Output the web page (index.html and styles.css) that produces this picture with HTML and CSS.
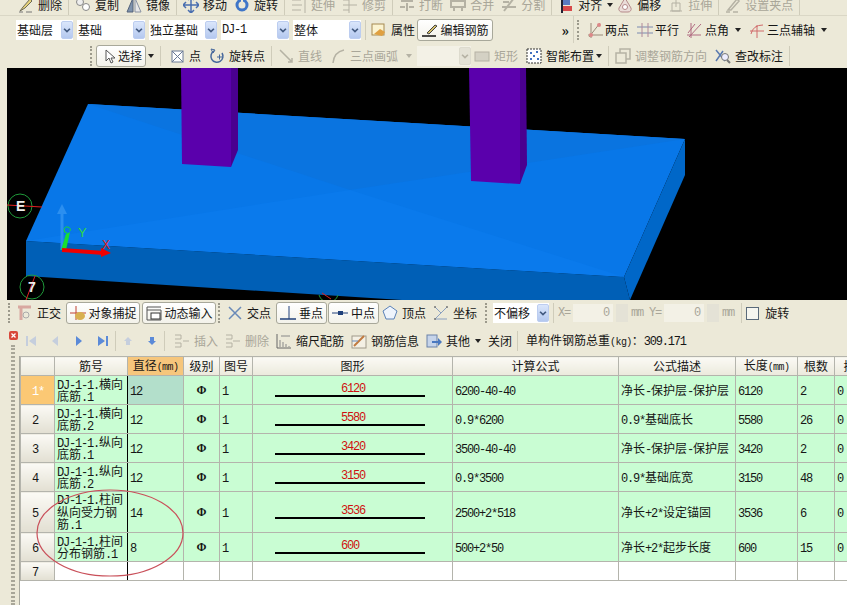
FILE: index.html
```html
<!DOCTYPE html>
<html lang="zh-CN">
<head>
  <meta charset="UTF-8" />
  <title>钢筋编辑</title>
  <link rel="stylesheet" href="styles.css">
</head>
<body>
  <!-- top toolbars -->
  <div class="tb top">
    <span class="it"><svg class="ic" viewBox="0 0 16 16"><path d="M2 14l3-4 7-8 2 2-7 7z" fill="#e6d27a" stroke="#6d6a58"/><path d="M1 15h4M8 15h6" stroke="#777"/></svg>删除</span>
    <i class="sep"></i>
    <span class="it"><svg class="ic" viewBox="0 0 16 16"><circle cx="5" cy="5" r="3.5" fill="#eee" stroke="#888"/><circle cx="11" cy="10" r="3.5" fill="#fff" stroke="#888"/></svg>复制</span>
    <span class="it"><svg class="ic" viewBox="0 0 16 16"><path d="M7 1v14H1z" fill="#7f93ad" stroke="#55637a"/><path d="M9 1v14h6z" fill="#e8e8e8" stroke="#8a93a3"/></svg>镜像</span>
    <i class="sep"></i>
    <span class="it"><svg class="ic" viewBox="0 0 16 16"><path d="M8 0v16M0 8h16M5 3l3-3 3 3M5 13l3 3 3-3M3 5L0 8l3 3M13 5l3 3-3 3" fill="none" stroke="#4a6fb0" stroke-width="1.5"/></svg>移动</span>
    <span class="it"><svg class="ic" viewBox="0 0 16 16"><circle cx="8" cy="8" r="5" fill="none" stroke="#3f76c8" stroke-width="3"/><path d="M8 0v6" stroke="#ece9d8" stroke-width="2"/></svg>旋转</span>
    <i class="sep"></i>
    <span class="it off"><svg class="ic" viewBox="0 0 16 16"><path d="M1 3h9M1 8h10M1 13h9M14 0v16" fill="none" stroke="#b5b2a4"/></svg>延伸</span>
    <span class="it off"><svg class="ic" viewBox="0 0 16 16"><path d="M1 3h6M1 8h14M1 13h6M7 0v16" fill="none" stroke="#b5b2a4"/></svg>修剪</span>
    <i class="sep"></i>
    <span class="it off"><svg class="ic" viewBox="0 0 16 16"><path d="M2 4h12M1 10h5M10 10h5M8 6v8" fill="none" stroke="#b5b2a4" stroke-width="2"/></svg>打断</span>
    <span class="it off"><svg class="ic" viewBox="0 0 16 16"><path d="M1 4h14v6H1zM4 10v4M12 10v4" fill="none" stroke="#b5b2a4" stroke-width="2"/></svg>合并</span>
    <span class="it off"><svg class="ic" viewBox="0 0 16 16"><path d="M1 10h14M3 14l10-13M2 5h6" fill="none" stroke="#b5b2a4" stroke-width="2"/></svg>分割</span>
    <i class="sep"></i>
    <span class="it"><svg class="ic" viewBox="0 0 16 16"><path d="M4 0v16" stroke="#223" stroke-width="2"/><rect x="5" y="3" width="7" height="5" fill="#5a7ac0"/><rect x="5" y="9" width="9" height="5" fill="#d84a4a"/></svg>对齐</span>
    <i class="caret"></i>
    <span class="it"><svg class="ic" viewBox="0 0 16 16"><path d="M8 1l6 10a3 3 0 0 1-3 4H5a3 3 0 0 1-3-4z" fill="#eadcd8" stroke="#b58a8a"/><circle cx="8" cy="10" r="2.5" fill="#fff" stroke="#b58a8a"/></svg>偏移</span>
    <span class="it off"><svg class="ic" viewBox="0 0 16 16"><path d="M4 14V6h8v8zM8 1v9M2 14h12" fill="none" stroke="#b5b2a4"/></svg>拉伸</span>
    <i class="sep"></i>
    <span class="it off"><svg class="ic" viewBox="0 0 16 16"><path d="M3 13L12 2l2 2-8 9zM1 15h4M8 15h5" fill="none" stroke="#b5b2a4" stroke-width="1.5"/></svg>设置夹点</span>
    <i class="sep"></i>
  </div>

  <div class="row2">
    <div class="tb bar-l">
      <div class="sels">
        <div class="sel w1"><span>基础层</span><b class="arr"><svg viewBox="0 0 12 16"><path d="M2.5 6.5L6 10l3.5-3.5" fill="none" stroke="#42597f" stroke-width="2"/></svg></b></div>
        <div class="sel"><span>基础</span><b class="arr"><svg viewBox="0 0 12 16"><path d="M2.5 6.5L6 10l3.5-3.5" fill="none" stroke="#42597f" stroke-width="2"/></svg></b></div>
        <div class="sel"><span>独立基础</span><b class="arr"><svg viewBox="0 0 12 16"><path d="M2.5 6.5L6 10l3.5-3.5" fill="none" stroke="#42597f" stroke-width="2"/></svg></b></div>
        <div class="sel"><span class="l">DJ-1</span><b class="arr"><svg viewBox="0 0 12 16"><path d="M2.5 6.5L6 10l3.5-3.5" fill="none" stroke="#42597f" stroke-width="2"/></svg></b></div>
        <div class="sel"><span>整体</span><b class="arr"><svg viewBox="0 0 12 16"><path d="M2.5 6.5L6 10l3.5-3.5" fill="none" stroke="#42597f" stroke-width="2"/></svg></b></div>
      </div>
      <i class="sep"></i>
      <span class="it"><svg class="ic" viewBox="0 0 16 16"><rect x="1" y="2" width="12" height="11" fill="#fbf3d0" stroke="#a58a50"/><path d="M3 12l6-5 5 3-3 4z" fill="#e0a040"/></svg>属性</span>
      <span class="btn edit"><svg class="ic" viewBox="0 0 16 16"><path d="M5 11l8-8 2 1-8 8z" fill="#d8c26a" stroke="#444"/><path d="M0 14h14" stroke="#111" stroke-width="1.5"/></svg>编辑钢筋</span>
      <span class="more">»</span>
    </div>
    <div class="tb bar-r">
      <i class="grip"></i>
      <span class="it"><svg class="ic" viewBox="0 0 16 16"><path d="M1 13h15M4 1v15M13 1L2 15" fill="none" stroke="#9a8a78"/><circle cx="4" cy="13" r="2" fill="#d88"/><circle cx="12" cy="3" r="2" fill="#d88"/></svg>两点</span>
      <span class="it"><svg class="ic" viewBox="0 0 16 16"><path d="M0 5h16M0 11h16" stroke="#7a8ab0"/><path d="M5 1v14M11 1v14" stroke="#b08a9a"/></svg>平行</span>
      <span class="it"><svg class="ic" viewBox="0 0 16 16"><path d="M0 13h14M4 1v15M14 2L2 15M8 2L1 11" fill="none" stroke="#b06a80"/></svg>点角</span>
      <i class="caret"></i>
      <span class="it"><svg class="ic" viewBox="0 0 16 16"><path d="M1 9h14M8 3v13" stroke="#d06a6a"/><path d="M2 12Q4 3 14 3" fill="none" stroke="#d06a6a"/></svg>三点辅轴</span>
      <i class="caret"></i>
    </div>
  </div>

  <div class="tb row3">
    <i class="grip"></i>
    <span class="btn pick"><svg class="ic" viewBox="0 0 16 16"><path d="M4 2v11l3-3 2 5 2-1-2-4h4z" fill="#fff" stroke="#555"/></svg>选择</span>
    <i class="caret"></i>
    <i class="sep"></i>
    <span class="it dot"><svg class="ic" viewBox="0 0 16 16"><rect x="2" y="3" width="11" height="11" fill="#fff" stroke="#6a7a96"/><path d="M2 3l11 11M13 3L2 14" stroke="#6a7a96"/></svg>点</span>
    <span class="it"><svg class="ic" viewBox="0 0 16 16"><path d="M5 3a6 6 0 1 0 8 2" fill="none" stroke="#46689c" stroke-width="1.5"/><path d="M2 1l4 1-2 3zM8 9h5M10.5 6.5v5" fill="none" stroke="#46689c"/></svg>旋转点</span>
    <i class="sep"></i>
    <span class="it off"><svg class="ic" viewBox="0 0 16 16"><path d="M2 2l12 12M10 14h4v-4" fill="none" stroke="#b5b2a4" stroke-width="1.5"/></svg>直线</span>
    <span class="it off"><svg class="ic" viewBox="0 0 16 16"><path d="M3 15Q4 4 14 2" fill="none" stroke="#b5b2a4" stroke-width="1.5"/></svg>三点画弧</span>
    <i class="caret off"></i>
    <div class="sel dis"><span></span><b class="arr"><svg viewBox="0 0 12 16"><path d="M2.5 6.5L6 10l3.5-3.5" fill="none" stroke="#b5b2a4" stroke-width="2"/></svg></b></div>
    <span class="it off rect"><svg class="ic" viewBox="0 0 16 16"><rect x="1" y="4" width="14" height="9" fill="#d4d1c4" stroke="#b5b2a4"/></svg>矩形</span>
    <span class="it"><svg class="ic" viewBox="0 0 16 16"><rect x="1" y="1" width="14" height="14" fill="#fff" stroke="#333" stroke-dasharray="2 1"/><path d="M4 5h2M10 4h2M7 8h2M4 11h2M11 11h2" stroke="#3f6fc0" stroke-width="2"/></svg>智能布置</span>
    <i class="caret"></i>
    <i class="sep"></i>
    <span class="it off"><svg class="ic" viewBox="0 0 16 16"><path d="M1 5h10v10H1zM5 5V1h10v10h-4" fill="none" stroke="#b5b2a4" stroke-width="1.5"/></svg>调整钢筋方向</span>
    <span class="it"><svg class="ic" viewBox="0 0 16 16"><path d="M1 2l9 11M1 13L8 3" stroke="#5a7ab0" stroke-width="1.5"/><circle cx="10" cy="9" r="3.5" fill="#eef" stroke="#777"/><path d="M12 12l3 3" stroke="#777" stroke-width="2"/></svg>查改标注</span>
    <i class="sep"></i>
  </div>

  <!-- 3d view -->
  <div class="view">
    <svg viewBox="7 68 840 232" width="840" height="232">
      <polygon points="88,104 685,139 624,277 26,241" fill="#0877e8"/>
      <polygon points="88,104 685,139 350,190" fill="#0a74e0"/>
      <polygon points="26,241 350,190 624,277" fill="#0a7aec"/>
      <polygon points="26,241 624,277 630,300 402,300 26,276" fill="#005fb6"/>
      <polygon points="685,139 685,175 630,300 624,277" fill="#0067c8"/>
      <polygon points="181,68 231,68 231,167 182,164" fill="#5a00ac"/>
      <polygon points="231,68 238,68 238,150 231,167" fill="#4a0090"/>
      <polygon points="469,68 520,68 520,184 471,181" fill="#5a00ac"/>
      <polygon points="520,68 526,68 527,165 520,184" fill="#4a0090"/>
      <g fill="none" stroke="#1f9a3a">
        <circle cx="20" cy="206" r="12"/>
        <circle cx="32" cy="287" r="12"/>
        <path d="M319 295a10 10 0 0 0 19 0"/>
      </g>
      <path d="M7 205l35 2M35 276L26 300M322 293l9 6" stroke="#e02020"/>
      <text class="mark" x="16" y="211">E</text>
      <text class="mark" x="28" y="292">7</text>
      <path d="M62 250V208" stroke="#2b8ff0" stroke-width="3"/>
      <polygon points="62,204 57,214 67,214" fill="#2b8ff0"/>
      <polygon points="61,250 66,250 70,232 66,234" fill="#18e030"/>
      <path d="M67 233a3 3 0 1 1 3 -2" fill="none" stroke="#18e030"/>
      <path d="M62 250l42 3" stroke="#f00000" stroke-width="4"/>
      <polygon points="101,248 111,253 101,257" fill="#f00000"/>
      <text class="ax-y" x="78" y="237">Y</text>
      <text class="ax-x" x="102" y="249">X</text>
    </svg>
  </div>

  <div class="tb snap">
    <i class="grip"></i>
    <span class="it off"><svg class="ic" viewBox="0 0 16 16"><path d="M1 2h13M4 2v13" stroke="#d8a8a0" stroke-width="3"/><circle cx="9" cy="10" r="3" fill="none" stroke="#aaa"/></svg><em>正交</em></span>
    <div class="btns">
      <span class="btn"><svg class="ic" viewBox="0 0 16 16"><path d="M0 8h16M6 1v14" stroke="#c04030"/><ellipse cx="10" cy="11" rx="5" ry="4" fill="#d8b050"/></svg>对象捕捉</span>
      <span class="btn"><svg class="ic" viewBox="0 0 16 16"><path d="M1 2h14M1 5h14M1 2v13h14V5" fill="none" stroke="#555"/><rect x="5" y="8" width="9" height="6" fill="#fff" stroke="#333"/></svg>动态输入</span>
    </div>
    <i class="grip"></i>
    <span class="it"><svg class="ic" viewBox="0 0 16 16"><path d="M2 2l12 12M14 2L2 14" stroke="#6a8ab8" stroke-width="1.5"/></svg>交点</span>
    <div class="btns tight">
      <span class="btn"><svg class="ic" viewBox="0 0 16 16"><path d="M0 14h16" stroke="#20407a" stroke-width="1.5"/><path d="M9 1v13" stroke="#20407a"/></svg>垂点</span>
      <span class="btn"><svg class="ic" viewBox="0 0 16 16"><path d="M0 8h16" stroke="#20407a"/><rect x="6" y="6" width="5" height="4" fill="#20407a"/></svg>中点</span>
    </div>
    <span class="it"><svg class="ic" viewBox="0 0 16 16"><path d="M8 1l7 5-3 8H4L1 6z" fill="#eef4fc" stroke="#5a82b8"/></svg>顶点</span>
    <span class="it"><svg class="ic" viewBox="0 0 16 16"><path d="M2 14L14 2M2 2l6 6M2 14h12" stroke="#8aa0c0"/><circle cx="2" cy="2" r="1" fill="#777"/><circle cx="14" cy="2" r="1" fill="#777"/><circle cx="2" cy="14" r="1" fill="#777"/></svg>坐标</span>
    <i class="grip far"></i>
    <div class="sel w2"><span>不偏移</span><b class="arr"><svg viewBox="0 0 12 16"><path d="M2.5 6.5L6 10l3.5-3.5" fill="none" stroke="#42597f" stroke-width="2"/></svg></b></div>
    <i class="sep"></i>
    <div class="coord">
      <span class="l">X=</span><span class="num l">0</span><b class="spin"></b><span class="l mm">mm</span>
      <span class="l">Y=</span><span class="num l">0</span><b class="spin"></b><span class="l mm">mm</span>
    </div>
    <i class="sep"></i>
    <i class="chk"></i>
    <span class="rot">旋转</span>
  </div>

  <!-- rebar table panel -->
  <div class="panel">
    <div class="side">
      <svg class="close" viewBox="0 0 9 9"><rect width="9" height="9" rx="2" fill="#d8483a"/><path d="M2.5 2.5l4 4M6.5 2.5l-4 4" stroke="#fff" stroke-width="1.3"/></svg>
      <i class="vgrip"></i>
    </div>
    <div class="main">
      <div class="tb ptool">
        <div class="nav">
          <svg class="nv" viewBox="0 0 12 14"><path d="M1 2h2v10H1zM11 2v10L4 7z" fill="#c5cedd"/></svg>
          <svg class="nv" viewBox="0 0 12 14"><path d="M9 2v10L3 7z" fill="#c5cedd"/></svg>
          <svg class="nv" viewBox="0 0 12 14"><path d="M3 2v10l6-5z" fill="#5b8ad8"/></svg>
          <svg class="nv" viewBox="0 0 12 14"><path d="M1 2v10l7-5zM9 2h2v10H9z" fill="#5b8ad8"/></svg>
          <i class="sep"></i>
          <svg class="nv" viewBox="0 0 12 14"><path d="M6 3l4 4H8v4H4V7H2z" fill="#c5cedd"/></svg>
          <svg class="nv" viewBox="0 0 12 14"><path d="M6 11L2 7h2V3h4v4h2z" fill="#5b8ad8"/></svg>
          <i class="sep"></i>
        </div>
        <span class="it off"><svg class="ic" viewBox="0 0 16 16"><path d="M1 2h6M7 2v4H1M1 10h6v4H1M9 8h6" fill="none" stroke="#b5b2a4"/></svg>插入</span>
        <span class="it off"><svg class="ic" viewBox="0 0 16 16"><path d="M1 2h6v4H1M1 10h6v4H1M8 8h7" fill="none" stroke="#b5b2a4"/></svg>删除</span>
        <span class="it"><svg class="ic" viewBox="0 0 16 16"><path d="M1 1v14h14" fill="none" stroke="#666"/><path d="M4 14V7M7 14V9M10 14v-3M13 14v-1M5 3h9" stroke="#888"/></svg>缩尺配筋</span>
        <span class="it"><svg class="ic" viewBox="0 0 16 16"><rect x="1" y="3" width="14" height="12" fill="#f4f0e4" stroke="#a09a8a"/><path d="M3 13L13 3" stroke="#c07a40" stroke-width="2"/><path d="M1 8h6" stroke="#6a8ab8"/></svg>钢筋信息</span>
        <span class="it"><svg class="ic" viewBox="0 0 16 16"><rect x="1" y="2" width="10" height="12" fill="#c6d4ea" stroke="#6a82a8"/><path d="M6 8h6V5l4 4-4 4v-3H6z" fill="#4a78c0"/></svg>其他</span>
        <i class="caret"></i>
        <span class="txt">关闭</span>
        <i class="sep"></i>
        <span class="txt total">单构件钢筋总重<span class="sm">(kg)</span>：<span class="l">309.171</span></span>
      </div>
      <div class="grid-wrap">
        <table class="grid">
          <colgroup>
            <col class="c0"><col class="c1"><col class="c2"><col class="c3"><col class="c4"><col class="c5"><col class="c6"><col class="c7"><col class="c8"><col class="c9"><col class="c10">
          </colgroup>
          <thead>
            <tr><th></th><th>筋号</th><th class="hot">直径<span class="sm">(mm)</span></th><th>级别</th><th>图号</th><th>图形</th><th>计算公式</th><th>公式描述</th><th>长度<span class="sm">(mm)</span></th><th>根数</th><th>搭</th></tr>
          </thead>
          <tbody>
            <tr class="r">
              <td class="idx cur"><span class="l">1*</span></td><td class="no"><span class="l">DJ-1-1.</span>横向<br>底筋<span class="l">.1</span></td><td class="sel-cell"><span class="l">12</span></td><td class="lv">Φ</td><td><span class="l">1</span></td>
              <td><div class="shape"><span class="l">6120</span></div></td><td><span class="l">6200-40-40</span></td><td>净长<span class="l">-</span>保护层<span class="l">-</span>保护层</td><td><span class="l">6120</span></td><td><span class="l">2</span></td><td><span class="l">0</span></td>
            </tr>
            <tr class="r">
              <td class="idx"><span class="l">2</span></td><td class="no"><span class="l">DJ-1-1.</span>横向<br>底筋<span class="l">.2</span></td><td><span class="l">12</span></td><td class="lv">Φ</td><td><span class="l">1</span></td>
              <td><div class="shape"><span class="l">5580</span></div></td><td><span class="l">0.9*6200</span></td><td><span class="l">0.9*</span>基础底长</td><td><span class="l">5580</span></td><td><span class="l">26</span></td><td><span class="l">0</span></td>
            </tr>
            <tr class="r">
              <td class="idx"><span class="l">3</span></td><td class="no"><span class="l">DJ-1-1.</span>纵向<br>底筋<span class="l">.1</span></td><td><span class="l">12</span></td><td class="lv">Φ</td><td><span class="l">1</span></td>
              <td><div class="shape"><span class="l">3420</span></div></td><td><span class="l">3500-40-40</span></td><td>净长<span class="l">-</span>保护层<span class="l">-</span>保护层</td><td><span class="l">3420</span></td><td><span class="l">2</span></td><td><span class="l">0</span></td>
            </tr>
            <tr class="r">
              <td class="idx"><span class="l">4</span></td><td class="no"><span class="l">DJ-1-1.</span>纵向<br>底筋<span class="l">.2</span></td><td><span class="l">12</span></td><td class="lv">Φ</td><td><span class="l">1</span></td>
              <td><div class="shape"><span class="l">3150</span></div></td><td><span class="l">0.9*3500</span></td><td><span class="l">0.9*</span>基础底宽</td><td><span class="l">3150</span></td><td><span class="l">48</span></td><td><span class="l">0</span></td>
            </tr>
            <tr class="r tall">
              <td class="idx"><span class="l">5</span></td><td class="no"><span class="l">DJ-1-1.</span>柱间<br>纵向受力钢<br>筋<span class="l">.1</span></td><td><span class="l">14</span></td><td class="lv">Φ</td><td><span class="l">1</span></td>
              <td><div class="shape"><span class="l">3536</span></div></td><td><span class="l">2500+2*518</span></td><td>净长<span class="l">+2*</span>设定锚固</td><td><span class="l">3536</span></td><td><span class="l">6</span></td><td><span class="l">0</span></td>
            </tr>
            <tr class="r">
              <td class="idx"><span class="l">6</span></td><td class="no"><span class="l">DJ-1-1.</span>柱间<br>分布钢筋<span class="l">.1</span></td><td><span class="l">8</span></td><td class="lv">Φ</td><td><span class="l">1</span></td>
              <td><div class="shape"><span class="l">600</span></div></td><td><span class="l">500+2*50</span></td><td>净长<span class="l">+2*</span>起步长度</td><td><span class="l">600</span></td><td><span class="l">15</span></td><td><span class="l">0</span></td>
            </tr>
            <tr class="blank">
              <td class="idx"><span class="l">7</span></td><td class="no"></td><td></td><td></td><td></td><td></td><td></td><td></td><td></td><td></td><td></td>
            </tr>
          </tbody>
        </table>
        <svg class="ring" viewBox="0 0 150 90"><ellipse cx="75" cy="45" rx="73" ry="43" fill="none" stroke="#c9505a" stroke-width="1.2"/></svg>
      </div>
    </div>
  </div>
</body>
</html>
```

FILE: styles.css
```css
html, body { margin: 0; height: 605px; overflow: hidden; }
body { background: #ece9d8; color: #161616; font: 12px/14px "Noto Sans CJK SC", "Liberation Sans", sans-serif; }

/* half-width latin in the old bitmap font is 6px wide */
.l { font-family: "Liberation Mono", monospace; letter-spacing: -1.2px; }
.sm { font-family: "Liberation Mono", monospace; font-size: 10px; letter-spacing: -0.6px; }

.tb { display: flex; align-items: center; gap: 8px; white-space: nowrap; }
.it { display: flex; align-items: center; gap: 4px; flex: none; }
.ic { width: 16px; height: 16px; flex: none; }
.off { color: #a9a699; }
.sep { width: 1px; height: 20px; margin: 0 -2px; background: #cfccba; flex: none; }
.grip { width: 0; height: 20px; border-left: 2px dotted #9c9a8c; flex: none; }
.caret { width: 0; height: 0; margin-left: -2px; border: 3px solid transparent; border-top: 4px solid #222; border-bottom: 0; flex: none; }
.caret.off { border-top-color: #b5b2a4; }
.btn { display: flex; align-items: center; justify-content: center; gap: 3px; height: 22px; border: 1px solid #a8a89a; border-radius: 3px; background: linear-gradient(#fff, #f3f2ea); box-sizing: border-box; flex: none; }

.top { height: 16px; padding-left: 18px; gap: 7px; align-items: flex-start; overflow: hidden; border-bottom: 1px solid #dad7c6; box-sizing: border-box; }
.top .it { margin-top: -3px; }
.top .sep { margin: 0 -1px; }
.top .caret { margin-top: 3px; margin-right: -3px; }

.row2 { display: flex; height: 27px; }
.bar-l { width: 574px; padding-left: 16px; box-sizing: border-box; border-right: 1px solid #d3d0bf; }
.bar-l .sep { margin: 0 -3px 0 -4px; }
.bar-r { flex: 1; padding-left: 3px; }
.bar-r .it { gap: 2px; }
.sels { display: flex; gap: 4px; }
.sel { display: flex; justify-content: space-between; width: 68px; height: 20px; background: #fff; line-height: 20px; flex: none; }
.sel span { padding-left: 1px; }
.sel.w1 { width: 57px; }
.sel.w2 { width: 56px; }
.sel.dis { width: 54px; margin-left: -3px; background: #f3f1e6; }
.sel.dis .arr { background: #e4e2d6; border-color: #dddbce; }
.arr { width: 12px; height: 18px; margin: 1px 0; background: linear-gradient(#dae6fb, #b4c8ef); border: 1px solid #bccdf0; box-sizing: border-box; border-radius: 2px; }
.arr svg { display: block; width: 10px; height: 16px; }
.edit { width: 76px; height: 22px; margin-left: -6px; }
.more { margin-left: auto; margin-right: 4px; font-size: 14px; font-weight: bold; }

.row3 { height: 25px; padding-left: 90px; }
.row3 .grip { margin-right: -4px; }
.pick { width: 50px; gap: 0; padding-left: 5px; justify-content: flex-start; }
.row3 .caret { margin-left: -6px; }
.row3 .caret.off { margin-left: 0; }
.dot { gap: 3px; padding-left: 3px; }
.rect { margin-left: -5px; }

.view { height: 232px; margin-left: 7px; background: #000; overflow: hidden; }
.view svg { display: block; }
.mark { fill: #eee; font: bold 14px "Liberation Sans", sans-serif; }
.ax-y { fill: #2fd84a; font: 13px "Liberation Sans", sans-serif; }
.ax-x { fill: #e02020; font: 12px "Liberation Sans", sans-serif; }

.snap { height: 26px; padding-left: 8px; gap: 5px; }
.snap .grip { margin: 0 2px 0 -3px; }
.snap .grip:first-child { margin: 0 2px 0 0; }
.snap .grip.far { margin: 0 1px 0 3px; }
.snap em { font-style: normal; color: #161616; }
.snap .btn { width: 74px; }
.snap .it + .it { margin-left: 2px; }
.btns { display: flex; gap: 2px; }
.btns.tight { gap: 1px; margin-right: -2px; }
.btns.tight .btn { width: 51px; }
.snap .sep { margin: 0 -1px; }
.coord { display: flex; align-items: center; gap: 3px; color: #a9a699; }
.num { width: 40px; height: 18px; padding-right: 4px; box-sizing: border-box; background: #f3f1e6; text-align: right; line-height: 18px; }
.spin { width: 12px; height: 18px; background: #e4e2d6; }
.mm { margin-right: 3px; }
.chk { width: 11px; height: 11px; border: 1px solid #5a6a7a; background: #f6f6f0; flex: none; }
.rot { margin-left: 1px; }

.panel { display: flex; height: 279px; }
.side { position: relative; width: 20px; flex: none; }
.close { position: absolute; left: 9px; top: 5px; width: 9px; height: 9px; }
.vgrip { position: absolute; left: 11px; top: 19px; bottom: 0; width: 4px; border-left: 2px dotted #a8a698; border-right: 2px dotted #a8a698; box-sizing: border-box; }
.main { flex: 1; min-width: 0; }
.ptool { height: 30px; gap: 7px; }
.nav { display: flex; align-items: center; gap: 12px; margin: 0 8px 0 5px; }
.nav .sep { margin: 0 -6px; }
.nv { width: 12px; height: 14px; flex: none; }
.txt { flex: none; }
.total { margin-left: 3px; }

.grid-wrap { position: relative; height: 249px; background: #fff; overflow: hidden; border-left: 1px solid #a8a89e; margin-left: -1px; }
.grid { width: 844px; border-collapse: collapse; table-layout: fixed; }
.c0 { width: 34px; } .c1 { width: 73px; } .c2 { width: 56px; } .c3 { width: 36px; } .c4 { width: 33px; }
.c5 { width: 200px; } .c6 { width: 166px; } .c7 { width: 117px; } .c8 { width: 62px; } .c9 { width: 37px; } .c10 { width: 30px; }
th, td { padding: 0 2px; border: 1px solid #b4b4ac; overflow: hidden; white-space: nowrap; }
th { height: 18px; font-weight: normal; background: linear-gradient(#fbfaf5, #ebe9dc); }
th.hot { background: #f6c67c; }
td { line-height: 12.5px; }
td .l { line-height: 0; }
.r td { height: 28px; background: #c9fdd3; }
.r.tall td { height: 40px; }
.blank td { height: 18px; background: #fff; }
td.idx { padding-left: 11px; background: linear-gradient(#fbfaf5, #e2dfd2); }
td.idx.cur { background: #fbc874; color: #fff; }
td.no { border-right-color: #000; }
td.sel-cell { background: #b3dfcb; }
td.lv { text-align: center; font: bold 12px "Liberation Serif", serif; }
.shape { width: 84px; height: 13px; margin: -2px 0 0 20px; padding-left: 66px; border-bottom: 2px solid #000; line-height: 10px; color: #d01010; }
.ring { position: absolute; left: 15px; top: 132px; width: 150px; height: 90px; }
```
